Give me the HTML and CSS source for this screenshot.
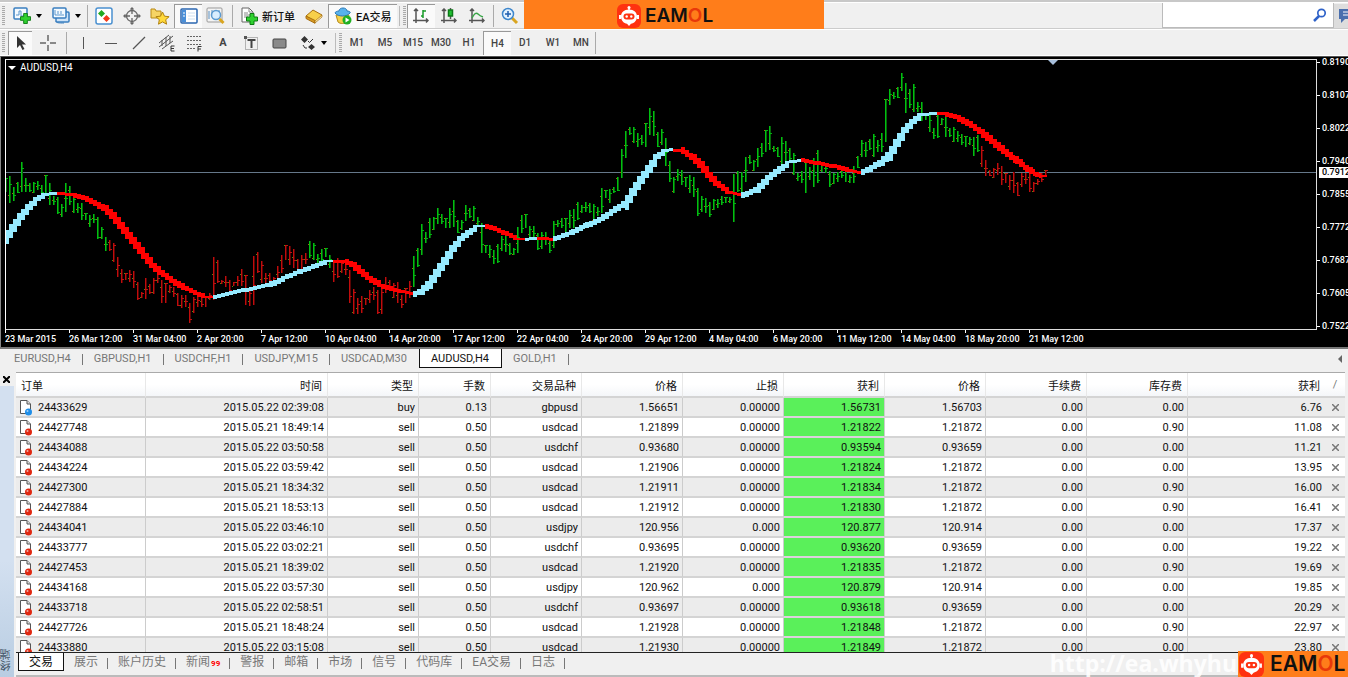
FILE: index.html
```html
<!DOCTYPE html>
<html lang="zh-CN">
<head>
  <meta charset="utf-8">
  <title>AUDUSD,H4</title>
  <link rel="stylesheet" href="styles.css">
</head>
<body>
  <svg class="defs" aria-hidden="true">
    <symbol id="i-plus" viewBox="0 0 12 12">
      <path d="M4 0.5h4V4h3.5v4H8v3.500H4V8H.5V4H4z" fill="#2fd12f" stroke="#0c7a12"/>
    </symbol>
    <symbol id="i-robot" viewBox="0 0 24 24">
      <rect width="24" height="24" rx="6" fill="#ff3210"/>
      <circle cx="12" cy="3.500" r="1.500" fill="#fff"/>
      <path d="M11.300 4h1.400v3h-1.400z" fill="#fff"/>
      <path d="M12 5.500c5 0 8 3 8 7s-3 7-6 7.300L12 22l-2-2.200C7 19.500 4 16.500 4 12.500s3-7 8-7z" fill="#fff"/>
      <path d="M2 11h2v4H2zM20 11h2v4h-2z" fill="#fff"/>
      <rect x="6.500" y="9.500" width="11" height="6" rx="3" fill="#ff3210"/>
      <circle cx="9.700" cy="12.500" r="1.200" fill="#fff"/>
      <circle cx="14.300" cy="12.500" r="1.200" fill="#fff"/>
    </symbol>
    <symbol id="i-order" viewBox="0 0 14 16">
      <path d="M1.500.5H8L11.500 4v9.500h-10z" fill="#fff" stroke="#555"/>
      <path d="M8 .5V4h3.500" fill="#ddd" stroke="#555"/>
      <circle cx="9.500" cy="12" r="3.500" fill="currentColor"/>
      <circle cx="8.500" cy="11" r="1" fill="#fff" opacity=".6"/>
    </symbol>
  </svg>

  <header class="toolbars">
    <div class="toolbar">
      <span class="grip"></span>
      <button class="tool drop" title="新图表">
        <svg width="18" height="18" viewBox="0 0 18 18"><rect x="1" y="1" width="13" height="11" rx="1" fill="#f4faff" stroke="#3a7fc0" stroke-width="1.500"/><path d="M3 8h3V4h2v5h4" fill="none" stroke="#5a96cc"/><use href="#i-plus" x="7" y="6" width="11" height="11"/></svg>
        <i class="caret"></i>
      </button>
      <button class="tool drop" title="图表模板">
        <svg width="18" height="18" viewBox="0 0 18 18"><rect x="4" y="5" width="13" height="10" rx="1" fill="#cfe4f8" stroke="#3a7fc0" stroke-width="1.500"/><rect x="1" y="1" width="13" height="10" rx="1" fill="#f4faff" stroke="#3a7fc0" stroke-width="1.500"/><path d="M3 3v5h9M6 4v3M9 4v3" fill="none" stroke="#5a96cc"/><path d="M4 14c0 2 3 2 8 2" fill="none" stroke="#3a7fc0"/></svg>
        <i class="caret"></i>
      </button>
      <span class="sep first"></span>
      <button class="tool" title="市场报价"><svg width="18" height="18" viewBox="0 0 18 18"><rect x="1" y="1" width="16" height="16" rx="2" fill="#fff" stroke="#4a90d0" stroke-width="1.500"/><path d="M6.500 3L10 6.500 6.500 10 3 6.500z" fill="#22aa22"/><path d="M11.500 8l3.500 3.500-3.500 3.500L8 11.500z" fill="#f23a1a"/></svg></button>
      <button class="tool" title="数据窗口"><svg width="18" height="18" viewBox="0 0 18 18" fill="none" stroke="#666" stroke-width="1.300"><circle cx="9" cy="9" r="5.500"/><path d="M9 1v6M9 11v6M1 9h6M11 9h6"/><path d="M7.500 2.500L9 1l1.500 1.500M7.500 15.500L9 17l1.500-1.500M2.500 7.500L1 9l1.500 1.500M15.500 7.500L17 9l-1.500 1.500"/></svg></button>
      <button class="tool" title="导航"><svg width="20" height="18" viewBox="0 0 20 18"><path d="M1 2h4l1 2h5v7H1z" fill="#f6d465" stroke="#b98a17"/><path d="M12.500 5l2 4.200 4.600.5-3.400 3 .9 4.500-4.100-2.300-4 2.300.8-4.500-3.400-3 4.600-.5z" fill="#ffd93b" stroke="#b0800d"/></svg></button>
      <button class="tool on" title="终端"><svg width="18" height="16" viewBox="0 0 18 16"><rect x="1" y="1" width="16" height="14" rx="1" fill="#fff" stroke="#2a66b0" stroke-width="1.500"/><path d="M2 2h4v12H2z" fill="#4a8fd8"/><path d="M3 5h2M3 8h2" stroke="#fff"/><path d="M8 5h7M8 8h7M8 11h7" stroke="#ccdff0"/></svg></button>
      <button class="tool" title="策略测试"><svg width="20" height="18" viewBox="0 0 20 18"><rect x="1" y="1" width="15" height="14" rx="1" fill="#f4f4f4" stroke="#999"/><path d="M3 4v8M6 3v6M13 3v3" stroke="#5a8fc0"/><circle cx="10" cy="8" r="4.500" fill="#d5ecff" fill-opacity=".9" stroke="#5b9ad0" stroke-width="1.500"/><path d="M13.500 12l4 4" stroke="#d9a520" stroke-width="3"/></svg></button>
      <span class="sep"></span>
      <button class="tool text-tool"><svg width="18" height="18" viewBox="0 0 18 18"><path d="M2 1h7l4 4v10H2z" fill="#fff" stroke="#666"/><path d="M9 1v4h4M4 6h4M4 8h6M4 10h4" fill="none" stroke="#888"/><use href="#i-plus" x="6" y="6" width="12" height="12"/></svg>新订单</button>
      <button class="tool" title="MetaEditor"><svg width="18" height="16" viewBox="0 0 18 16"><path d="M1 8l7-6 9 5-7 7z" fill="#f7cf4a" stroke="#a86f10"/><path d="M1 8l9 4.500v2.800L1 10.500z" fill="#d89a20" stroke="#a86f10"/><path d="M10 13l7-6v2l-7 6z" fill="#fff0b0" stroke="#a86f10" stroke-width=".7"/></svg></button>
      <button class="tool text-tool on"><svg width="18" height="18" viewBox="0 0 18 18"><path d="M2 8h13l-2 7c-2 2-7 2-9 0z" fill="#f4d14a" stroke="#b58b1c"/><path d="M1 6c0-1 2-2 4-2 0-4 8-4 8 0 2 0 4 1 3 2-3 4-12 4-15 0z" fill="#58b2ec" stroke="#2a79b8"/><circle cx="13" cy="13" r="4.500" fill="#21b021"/><path d="M11.500 10.500v5l4-2.500z" fill="#fff"/></svg>EA交易</button>
      <span class="grip wide"></span>
      <button class="tool on" title="柱状图"><svg width="16" height="16" viewBox="0 0 16 16" fill="none" stroke="#555" stroke-width="1.500"><path d="M3 1v14M0 12.500h15M1 3l2-2 2 2M13 10.500l2 2-2 2"/><path d="M10 2v8M10 3h3M8 8h2" stroke="#189a28"/></svg></button>
      <button class="tool" title="阴阳烛"><svg width="16" height="16" viewBox="0 0 16 16" fill="none" stroke="#555" stroke-width="1.500"><path d="M3 1v14M0 12.500h15M1 3l2-2 2 2M13 10.500l2 2-2 2M9.500 0v11"/><path d="M7.500 2h4v6h-4z" fill="#22c032" stroke="#0d7a18"/></svg></button>
      <button class="tool" title="折线图"><svg width="16" height="16" viewBox="0 0 16 16" fill="none" stroke="#555" stroke-width="1.500"><path d="M3 1v14M0 12.500h15M1 3l2-2 2 2M13 10.500l2 2-2 2"/><path d="M3 10c2-4 4-6 6-4s2 2 5 3" stroke="#3aa548"/></svg></button>
      <span class="sep"></span>
      <button class="tool" title="放大"><svg width="18" height="18" viewBox="0 0 18 18"><path d="M11 11l5 5" stroke="#d9a520" stroke-width="3"/><circle cx="7" cy="7" r="5.500" fill="#e4f3ff" stroke="#3d86cc" stroke-width="1.500"/><path d="M7 4v6M4 7h6" stroke="#1f5fb0" stroke-width="1.500"/></svg></button>

      <div class="search">
        <input type="text" aria-label="搜索">
        <svg width="14" height="14" viewBox="0 0 14 14" fill="none" stroke="#2f62c8"><circle cx="8.500" cy="5" r="3.700" stroke-width="1.700"/><path d="M6 8l-5 5" stroke-width="2.500"/></svg>
      </div>
      <button class="chat" title="聊天"><svg width="14" height="16" viewBox="0 0 14 16"><path d="M1 1h13v10H7l-4 4v-4H1z" fill="#4a6fae"/><path d="M5 4h7M5 7h7" stroke="#fff"/></svg></button>
    </div>

    <div class="toolbar second">
      <span class="grip"></span>
      <button class="tool cursor on" title="光标"><svg width="12" height="16" viewBox="0 0 12 16"><path d="M2 1v12l3-3 2.500 5 2-1L7 9.500h4z" fill="#333"/></svg></button>
      <button class="tool cross" title="十字线"><svg width="16" height="16" viewBox="0 0 16 16" stroke="#666" stroke-width="1.500"><path d="M8 0v6M8 10v6M0 8h6M10 8h6"/></svg></button>
      <span class="sep"></span>
      <button class="tool" title="垂直线"><svg width="16" height="16" viewBox="0 0 16 16" stroke="#555"><path d="M8.500 2v12"/></svg></button>
      <button class="tool" title="水平线"><svg width="16" height="16" viewBox="0 0 16 16" stroke="#555"><path d="M2 8.500h12"/></svg></button>
      <button class="tool" title="趋势线"><svg width="16" height="16" viewBox="0 0 16 16" stroke="#555"><path d="M2 14L14 2" stroke-width="1.300"/></svg></button>
      <button class="tool" title="通道"><svg width="18" height="18" viewBox="0 0 18 18" stroke="#555"><path d="M1 9L11 1M1 13L15 2M4 15l11-8M4 6v6M8 3v9M12 2v7" fill="none"/><path d="M16.500 12H13v5h3.500M13 14.500h3" fill="none" stroke="#333"/></svg></button>
      <button class="tool" title="斐波那契"><svg width="18" height="18" viewBox="0 0 18 18" stroke="#666"><path d="M1 2.500h15M1 6.500h15M1 10.500h15M1 14.500h8" stroke-dasharray="2 1"/><path d="M15.500 12.500H12v5M12 15h3" fill="none" stroke="#333"/></svg></button>
      <button class="tool letter" title="文本">A</button>
      <button class="tool" title="文本标签"><svg width="16" height="16" viewBox="0 0 16 16"><rect x="2.500" y="2.500" width="12" height="12" fill="none" stroke="#777" stroke-dasharray="1 1"/><path d="M4.500 5h8M8.500 5v8" stroke="#444" stroke-width="2"/><path d="M1 1h3v3H1z" fill="#555"/></svg></button>
      <button class="tool" title="矩形"><svg width="16" height="16" viewBox="0 0 16 16"><rect x="2" y="4" width="13" height="9" rx="1" fill="#8a8a8a" stroke="#444"/></svg></button>
      <button class="tool shapes" title="箭头"><svg width="16" height="16" viewBox="0 0 16 16" fill="#333"><path d="M4.500 1L8 4.500 4.500 8 1 4.500zM11.500 9l3.500 3-3.500 3L8 12z"/><path d="M13 4L9.500 7.500 8 6M3 10l2 3h2" fill="none" stroke="#333"/></svg><i class="caret"></i></button>
      <span class="grip wide"></span>
      <div class="frames-list">
        <button class="tool frame">M1</button>
        <button class="tool frame">M5</button>
        <button class="tool frame">M15</button>
        <button class="tool frame">M30</button>
        <button class="tool frame">H1</button>
        <button class="tool frame on">H4</button>
        <button class="tool frame">D1</button>
        <button class="tool frame">W1</button>
        <button class="tool frame">MN</button>
      </div>
      <span class="sep last"></span>
    </div>

    <div class="banner">
      <svg class="robot" width="24" height="24"><use href="#i-robot"/></svg>
      <span class="brand">EAM<b>O</b>L</span>
    </div>
  </header>

  <main class="chart">
    <div class="plot">
      <div class="chart-title"><i class="caret"></i>AUDUSD,H4</div>
      <div class="price-line"></div>
      <svg class="series" id="series" width="1050" height="268"></svg>
      <i class="shift-mark"></i>
    </div>
    <div class="prices" id="prices"></div>
    <div class="times" id="times"></div>
  </main>

  <nav class="tabs chart-tabs">
    <a href="#">EURUSD,H4</a>
    <a href="#">GBPUSD,H1</a>
    <a href="#">USDCHF,H1</a>
    <a href="#">USDJPY,M15</a>
    <a href="#" class="before">USDCAD,M30</a>
    <a href="#" class="active">AUDUSD,H4</a>
    <a href="#">GOLD,H1</a>
    <i class="scroll-left"></i>
  </nav>

  <section class="terminal">
    <aside class="side">
      <button class="close" title="关闭"><svg width="7" height="7" viewBox="0 0 7 7" stroke="#000" stroke-width="2"><path d="M0 0l7 7M7 0L0 7"/></svg></button>
      <span class="side-name">终端</span>
    </aside>
    <div class="terminal-main">
      <div class="orders">
        <table>
          <colgroup>
            <col class="c-order"><col class="c-time"><col class="c-type"><col class="c-lots"><col class="c-type">
            <col class="c-price"><col class="c-price"><col class="c-price"><col class="c-price"><col class="c-price"><col class="c-price">
            <col><col class="c-close">
          </colgroup>
          <thead>
            <tr><th>订单</th><th>时间</th><th>类型</th><th>手数</th><th>交易品种</th><th>价格</th><th>止损</th><th>获利</th><th>价格</th><th>手续费</th><th>库存费</th><th>获利</th><th class="sort">/</th></tr>
          </thead>
          <tbody id="orders"></tbody>
        </table>
      </div>
      <nav class="tabs terminal-tabs">
        <a href="#" class="active">交易</a>
        <a href="#">展示</a>
        <a href="#">账户历史</a>
        <a href="#">新闻<sub>99</sub></a>
        <a href="#">警报</a>
        <a href="#">邮箱</a>
        <a href="#">市场</a>
        <a href="#">信号</a>
        <a href="#">代码库</a>
        <a href="#">EA交易</a>
        <a href="#">日志</a>
      </nav>
    </div>
  </section>

  <div class="watermark">http://ea.whyhu</div>
  <div class="badge">
    <svg class="robot" width="25" height="25"><use href="#i-robot"/></svg>
    <span class="brand">EAM<b>O</b>L</span>
  </div>

  <script src="script.js"></script>
</body>
</html>
```
FILE: styles.css
```css
* {
  box-sizing: border-box;
}

body {
  margin: 0;
  height: 100vh;
  display: flex;
  flex-direction: column;
  overflow: hidden;
  background: #f0f0f0;
  color: #111;
  font-family: Roboto, "Noto Sans CJK SC", sans-serif;
  font-size: 11px;
}

button {
  border: 0;
  padding: 0;
  background: none;
  color: inherit;
  font: inherit;
}

a {
  color: inherit;
  text-decoration: none;
}

svg {
  display: block;
  flex: none;
}

.defs {
  position: absolute;
  width: 0;
  height: 0;
}

/* toolbars */

.toolbars {
  position: relative;
  flex: none;
  border-top: 2px solid #c8c8c8;
  border-bottom: 1px solid #fff;
}

.toolbar {
  display: flex;
  align-items: center;
  height: 27px;
  border-top: 1px solid #fff;
  border-bottom: 1px solid #ccc;
}

.toolbar.second {
  height: 26px;
  border-bottom: 0;
}

.grip {
  flex: none;
  width: 3px;
  height: 20px;
  margin: 0 3px 0 2px;
  background: repeating-linear-gradient(#aaa 0 1px, #eee 1px 2px);
}

.grip.wide {
  width: 7px;
  margin: 0 1px 0 2px;
  background: repeating-linear-gradient(#aaa 0 1px, #eee 1px 2px) 3px 0 / 3px 100% no-repeat;
  border-left: 1px solid #bbb;
}

.sep {
  flex: none;
  width: 1px;
  height: 22px;
  margin: 0 2px;
  background: #aaa;
}

.sep.first {
  margin: 0 2px 0 1px;
}

.sep.last {
  margin: 0;
}

.tool {
  flex: none;
  display: flex;
  align-items: center;
  justify-content: center;
  width: 28px;
  height: 24px;
}

.tool.on {
  background: #fafafa;
  border-top: 1px solid #999;
  border-left: 1px solid #999;
}

.drop {
  width: 39px;
  gap: 5px;
}

.text-tool {
  width: auto;
  padding: 0 5px;
  gap: 4px;
  font-weight: 500;
}

.cursor {
  width: 24px;
}

.cross {
  width: 32px;
}

.letter {
  color: #444;
  font-weight: 700;
}

.shapes {
  width: 40px;
  gap: 5px;
}

.frames-list {
  display: flex;
}

.frame {
  color: #444;
  font-size: 10px;
  font-weight: 500;
}

.caret {
  border: 3px solid transparent;
  border-top: 4px solid #000;
  border-bottom: 0;
}

.search {
  display: flex;
  align-items: center;
  width: 172px;
  height: 25px;
  margin-left: auto;
  padding-right: 6px;
  background: #fff;
  border: 1px solid #bbb;
  border-top: 0;
}

.search input {
  flex: 1;
  min-width: 0;
  border: 0;
  outline: 0;
  background: none;
}

.chat {
  width: 14px;
  height: 24px;
  padding-left: 4px;
  overflow: hidden;
  background: #ddd;
}

.banner {
  position: absolute;
  top: -2px;
  left: 524px;
  display: flex;
  align-items: center;
  gap: 4px;
  width: 300px;
  height: 29px;
  padding: 2px 0 0 93px;
  background: #ff7d1a;
}

.brand {
  color: #111;
  font-family: Inter, sans-serif;
  font-size: 19px;
  font-weight: 600;
  line-height: 24px;
}

.brand b {
  color: #e8380a;
  font-weight: 600;
}

/* chart */

.chart {
  flex: none;
  display: grid;
  grid-template-columns: 1fr 31px;
  grid-template-rows: 271px 17px;
  padding: 2px 0 0 4px;
  background: #000;
  border-top: 1px solid #555;
  border-left: 1px solid #888;
  color: #fff;
  font-size: 9px;
  font-weight: 500;
}

.plot {
  position: relative;
  overflow: hidden;
  border: 1px solid #ddd;
  border-left-color: #fff;
}

.chart-title {
  position: absolute;
  top: 1px;
  left: 2px;
  display: flex;
  align-items: center;
  gap: 4px;
  font-size: 10px;
  font-weight: 400;
  line-height: 14px;
}

.chart-title .caret {
  border-width: 4px 4px 0;
  border-top-color: #fff;
}

.price-line {
  position: absolute;
  top: 112px;
  left: 0;
  right: 0;
  height: 1px;
  background: #66788a;
}

.series {
  position: relative;
}

.shift-mark {
  position: absolute;
  top: 0;
  left: 1042px;
  border: 5px solid transparent;
  border-top-color: #a8c0dc;
}

.prices {
  display: flex;
  flex-direction: column;
  position: relative;
  margin-top: -5px;
  overflow: hidden;
}

.prices span {
  flex: none;
  height: 33px;
  padding-left: 5px;
  line-height: 17px;
  background: linear-gradient(#fff, #fff) 0 8px / 3px 1px no-repeat;
}

.prices .now {
  position: absolute;
  top: 113px;
  right: 0;
  width: 29px;
  height: 11px;
  padding-left: 3px;
  line-height: 11px;
  background: #fff;
  color: #000;
  font-weight: 500;
}

.times {
  display: flex;
  grid-column: 1 / 3;
  overflow: hidden;
}

.times span {
  flex: none;
  width: 64px;
  padding-top: 3px;
  line-height: 13px;
  white-space: nowrap;
  background: linear-gradient(#fff, #fff) 0 0 / 1px 3px no-repeat;
}

.ma-up {
  fill: #96eaff;
}

.ma-down {
  fill: #f00;
}

/* tabs */

.tabs {
  flex: none;
  display: flex;
  color: #777;
}

.tabs a {
  position: relative;
}

.tabs a:not(.active)::after {
  content: "";
  position: absolute;
  top: 5px;
  right: 0;
  width: 1px;
  height: 11px;
  background: #777;
}

.tabs a.before::after {
  display: none;
}

.tabs .active {
  background: #fff;
  border: 1px solid #111;
  border-top: 0;
  color: #111;
}

.chart-tabs {
  height: 25px;
  padding-left: 3px;
  border-top: 2px solid #777;
  line-height: 19px;
}

.chart-tabs a {
  height: 19px;
  padding: 0 12px 0 11px;
}

.scroll-left {
  margin: 6px 6px 0 auto;
  height: 0;
  border: 4px solid transparent;
  border-left-width: 0;
  border-right-color: #666;
}

.terminal-tabs {
  height: 25px;
  padding-left: 2px;
  border-top: 1px solid #222;
  border-bottom: 2px solid #bbb;
  font-size: 12px;
  line-height: 19px;
}

.terminal-tabs a {
  height: 18px;
  padding: 0 10px;
  white-space: nowrap;
}

.terminal-tabs .active {
  background: #fff;
}

.terminal-tabs sub {
  margin-left: 1px;
  color: #f00;
  font-size: 8px;
  font-weight: 700;
  line-height: 1;
  vertical-align: baseline;
}

/* terminal */

.terminal {
  flex: 1;
  min-height: 0;
  display: flex;
}

.side {
  flex: none;
  display: flex;
  flex-direction: column;
  width: 16px;
}

.close {
  display: flex;
  align-items: center;
  justify-content: center;
  width: 13px;
  height: 14px;
}

.side-name {
  flex: 1;
  width: 14px;
  padding-top: 6px;
  background: linear-gradient(#b9cde2, #d3e0f0 40%);
  color: #456;
  line-height: 14px;
  writing-mode: vertical-rl;
  transform: rotate(180deg);
}

.terminal-main {
  flex: 1;
  min-width: 0;
  display: flex;
  flex-direction: column;
}

.orders {
  flex: 1;
  min-height: 0;
  overflow: hidden;
  margin-right: 3px;
  background: #fff;
  border-top: 1px solid #aaa;
}

table {
  width: 100%;
  table-layout: fixed;
  border-collapse: separate;
  border-spacing: 0;
}

.c-order {
  width: 130px;
}

.c-time {
  width: 182px;
}

.c-type {
  width: 91px;
}

.c-lots {
  width: 72px;
}

.c-price {
  width: 101px;
}

.c-close {
  width: 20px;
}

th {
  height: 25px;
  padding: 0 5px;
  background: linear-gradient(#fff 50%, #f4f6f9);
  border-right: 1px solid #e8e8e8;
  border-bottom: 2px solid #d4d4d4;
  font-weight: 400;
  text-align: right;
}

th:first-child {
  text-align: left;
}

td {
  height: 20px;
  padding: 2px 3px 0;
  border-right: 1px solid #ccc;
  border-bottom: 2px solid #d4d4d4;
  line-height: 16px;
  text-align: right;
  white-space: nowrap;
}

tbody tr:nth-child(odd) {
  background: #ececec;
}

td:nth-last-child(-n+2),
th:nth-last-child(-n+2) {
  border-right: 0;
}

th.sort,
td.remove {
  padding: 0;
  color: #777;
  text-align: center;
}

.remove svg {
  margin: auto;
}

.order {
  display: flex;
  align-items: center;
  gap: 5px;
}

.buy {
  color: #1e8ee8;
}

.sell {
  color: #e02810;
}

.profit {
  background: #5af05a;
  border-bottom-color: #ddd0dd;
}

/* overlays */

.watermark {
  position: absolute;
  right: 111px;
  bottom: 0;
  color: rgba(255, 255, 255, .9);
  font-family: "Open Sans", sans-serif;
  font-size: 23px;
  font-weight: 700;
  line-height: 28px;
}

.badge {
  position: absolute;
  right: 0;
  bottom: 0;
  display: flex;
  align-items: center;
  gap: 6px;
  width: 110px;
  height: 26px;
  padding-left: 1px;
  overflow: hidden;
  background: #ff7d1a;
}

.badge .brand {
  font-size: 21px;
}
```
FILE: script.js
```js
var SVG = "http://www.w3.org/2000/svg";
var STEP = 4;

// high / low of every bar, in chart pixels
var bars = [
  178,192, 176,203, 187,201, 182,193, 162,192, 178,192, 183,192, 182,193, 181,190, 185,195,
  175,193, 183,205, 196,205, 197,214, 204,217, 183,212, 186,205, 197,213, 203,213, 203,220,
  213,220, 215,227, 214,223, 217,239, 227,239, 237,251, 240,251, 243,262, 257,277, 269,283,
  273,280, 270,282, 271,288, 282,300, 292,298, 278,299, 284,294, 278,294, 275,283, 280,303,
  283,303, 285,293, 287,297, 293,306, 295,308, 295,307, 303,323, 297,313, 295,307, 298,307,
  297,307, 293,300, 257,300, 260,283, 280,284, 276,287, 280,292, 282,286, 276,286, 269,286,
  275,305, 288,306, 256,305, 252,273, 261,283, 273,283, 273,282, 277,283, 266,280, 255,273,
  245,260, 246,265, 249,268, 259,272, 255,273, 253,264, 241,258, 243,260, 254,263, 249,263,
  248,257, 255,268, 263,282, 258,278, 261,273, 263,275, 270,303, 289,314, 298,314, 296,313,
  298,305, 290,303, 287,300, 290,314, 287,314, 277,293, 280,290, 283,298, 282,303, 295,308,
  288,303, 281,298, 256,287, 248,267, 224,255, 232,243, 218,238, 217,230, 208,224, 214,224,
  218,228, 208,228, 200,227, 220,233, 220,230, 205,221, 208,218, 206,221, 217,227, 223,253,
  245,253, 245,258, 250,264, 244,263, 236,251, 235,252, 243,255, 248,255, 227,253, 215,233,
  214,228, 226,237, 226,238, 233,250, 232,249, 232,245, 240,253, 221,248, 220,227, 218,228,
  218,232, 210,228, 209,228, 202,220, 205,213, 202,212, 203,213, 204,222, 207,216, 188,213,
  190,198, 189,203, 187,193, 177,191, 149,178, 131,158, 127,135, 127,143, 133,147, 135,145,
  123,147, 108,135, 111,136, 132,147, 129,145, 138,166, 161,182, 177,193, 169,181, 170,185,
  177,187, 175,193, 177,197, 188,216, 196,212, 198,213, 202,217, 199,210, 199,208, 196,205,
  197,203, 197,203, 174,222, 171,192, 172,192, 157,182, 155,164, 160,171, 148,167, 143,157,
  130,152, 126,150, 146,152, 147,157, 137,167, 141,163, 148,160, 153,175, 173,181, 171,183,
  162,193, 167,180, 158,187, 150,183, 163,172, 163,173, 171,187, 173,184, 172,182, 168,178,
  169,182, 175,183, 166,183, 156,168, 140,157, 142,157, 139,150, 134,157, 140,152, 133,152,
  99,142, 89,105, 92,99, 87,98, 73,91, 83,113, 89,108, 84,112, 102,112, 102,121,
  113,120, 115,132, 128,139, 113,138, 118,125, 117,137, 128,137, 127,142, 131,142, 134,145,
  136,147, 137,145, 137,156, 135,152, 146,167, 160,176, 170,176, 168,178, 163,175, 166,185,
  173,183, 175,190, 172,193, 182,196, 173,187, 173,184, 173,192, 182,192, 179,185, 173,182,
  170,177
];

// bar index ranges drawn in red
var redBars = [[26, 75], [82, 101], [244, 260]];

// moving average, split where it changes direction
var average = [
  ["up", 5,237, 13,225, 21,214, 29,205, 37,198, 45,194, 57,193],
  ["down", 57,193, 73,195, 85,199, 97,205, 105,210, 113,218, 121,228, 129,238, 137,248, 145,258, 153,267, 161,274, 173,282, 185,289, 197,294, 205,297, 213,297],
  ["up", 213,297, 225,294, 241,290, 257,287, 269,284, 285,277, 299,271, 315,265, 327,261, 333,261],
  ["down", 333,261, 345,262, 353,266, 361,273, 369,279, 381,286, 393,290, 401,292, 413,294],
  ["up", 413,294, 421,290, 429,282, 437,270, 445,258, 453,246, 461,237, 469,231, 477,226, 485,226],
  ["down", 485,226, 493,229, 505,234, 517,239, 525,239],
  ["up", 525,239, 537,238],
  ["down", 537,238, 553,239],
  ["up", 553,239, 571,232, 585,225, 601,218, 613,210, 625,202, 633,189, 641,177, 649,166, 657,155, 665,150, 673,149],
  ["down", 673,150, 681,151, 693,159, 701,167, 709,177, 717,185, 729,193, 741,195],
  ["up", 741,195, 757,188, 769,176, 781,167, 789,162, 801,160],
  ["down", 801,160, 817,163, 837,167, 849,171, 861,173],
  ["up", 861,172, 869,168, 881,161, 889,153, 897,140, 905,128, 913,120, 921,114, 937,113],
  ["down", 937,113, 945,114, 957,118, 969,125, 981,133, 993,143, 1005,153, 1015,160, 1025,168, 1035,174, 1041,176, 1047,176]
];

var times = ["23 Mar 2015", "26 Mar 12:00", "31 Mar 04:00", "2 Apr 20:00", "7 Apr 12:00", "10 Apr 04:00",
  "14 Apr 20:00", "17 Apr 12:00", "22 Apr 04:00", "24 Apr 20:00", "29 Apr 12:00", "4 May 04:00",
  "6 May 20:00", "11 May 12:00", "14 May 04:00", "18 May 20:00", "21 May 12:00"];

var prices = ["0.8190", "0.8107", "0.8022", "0.7940", "0.7855", "0.7772", "0.7687", "0.7605", "0.7522"];

var orders = [
  "24433629|2015.05.22 02:39:08|buy|0.13|gbpusd|1.56651|0.00000|1.56731|1.56703|0.00|0.00|6.76",
  "24427748|2015.05.21 18:49:14|sell|0.50|usdcad|1.21899|0.00000|1.21822|1.21872|0.00|0.90|11.08",
  "24434088|2015.05.22 03:50:58|sell|0.50|usdchf|0.93680|0.00000|0.93594|0.93659|0.00|0.00|11.21",
  "24434224|2015.05.22 03:59:42|sell|0.50|usdcad|1.21906|0.00000|1.21824|1.21872|0.00|0.00|13.95",
  "24427300|2015.05.21 18:34:32|sell|0.50|usdcad|1.21911|0.00000|1.21834|1.21872|0.00|0.90|16.00",
  "24427884|2015.05.21 18:53:13|sell|0.50|usdcad|1.21912|0.00000|1.21830|1.21872|0.00|0.90|16.41",
  "24434041|2015.05.22 03:46:10|sell|0.50|usdjpy|120.956|0.000|120.877|120.914|0.00|0.00|17.37",
  "24433777|2015.05.22 03:02:21|sell|0.50|usdchf|0.93695|0.00000|0.93620|0.93659|0.00|0.00|19.22",
  "24427453|2015.05.21 18:39:02|sell|0.50|usdcad|1.21920|0.00000|1.21835|1.21872|0.00|0.90|19.69",
  "24434168|2015.05.22 03:57:30|sell|0.50|usdjpy|120.962|0.000|120.879|120.914|0.00|0.00|19.85",
  "24433718|2015.05.22 02:58:51|sell|0.50|usdchf|0.93697|0.00000|0.93618|0.93659|0.00|0.00|20.29",
  "24427726|2015.05.21 18:48:24|sell|0.50|usdcad|1.21928|0.00000|1.21848|1.21872|0.00|0.90|22.97",
  "24433880|2015.05.22 03:15:08|sell|0.50|usdcad|1.21930|0.00000|1.21849|1.21872|0.00|0.00|23.80"
];

var series = document.getElementById("series");
series.setAttribute("viewBox", "6 60 1050 268");

function rect(x, y, w, h, fill, cls) {
  var r = document.createElementNS(SVG, "rect");
  r.setAttribute("x", x);
  r.setAttribute("y", y);
  r.setAttribute("width", w);
  r.setAttribute("height", h);
  if (fill) r.setAttribute("fill", fill);
  if (cls) r.setAttribute("class", cls);
  series.appendChild(r);
}

function isRed(i) {
  return redBars.some(function (r) { return i >= r[0] && i <= r[1]; });
}

for (var i = 0; i < bars.length / 2; i++) {
  var high = bars[i * 2], low = bars[i * 2 + 1];
  var x = 5 + i * STEP;
  var red = isRed(i);
  var size = low - high;
  rect(x, high, 1, size, red ? "#c00c0c" : "#00c010");
  rect(x + 1, high, 1, size, red ? "#5a0404" : "#046a08");
  rect(x - 1, high + Math.round(size * (i * 7 % 10) / 10), 1, 1, red ? "#5a8a10" : "#a06010");
  rect(x + 1, high + Math.round(size * (i * 3 % 10) / 10), 2, 1, red ? "#c01010" : "#00b010");
}

average.forEach(function (part) {
  for (var k = 1; k + 3 < part.length; k += 2) {
    var x0 = part[k], y0 = part[k + 1], x1 = part[k + 2], y1 = part[k + 3];
    var slope = (y1 - y0) / (x1 - x0);
    var half = 1 + Math.abs(slope) * 4;
    for (var px = x0; px < x1; px += STEP) {
      var y = y0 + slope * (px - x0);
      rect(px, Math.round(y - half), Math.min(STEP, x1 - px), Math.round(half * 2), null, "ma-" + part[0]);
    }
  }
});

document.getElementById("times").innerHTML = times.map(function (t) {
  return "<span>" + t + "</span>";
}).join("");

document.getElementById("prices").innerHTML = prices.map(function (p) {
  return "<span>" + p + "</span>";
}).join("") + '<b class="now">0.7912</b>';

document.getElementById("orders").innerHTML = orders.map(function (line) {
  var c = line.split("|");
  var cells = c.slice(1).map(function (v, n) {
    return "<td" + (n === 6 ? ' class="profit"' : "") + ">" + v + "</td>";
  }).join("");
  return '<tr><td><div class="order"><svg class="' + c[2] + '" width="14" height="16"><use href="#i-order"/></svg>' + c[0] + "</div></td>" +
    cells + '<td class="remove"><svg width="7" height="7" viewBox="0 0 7 7" stroke="#777" stroke-width="1.500"><path d="M0 0l7 7M7 0L0 7"/></svg></td></tr>';
}).join("");
```
